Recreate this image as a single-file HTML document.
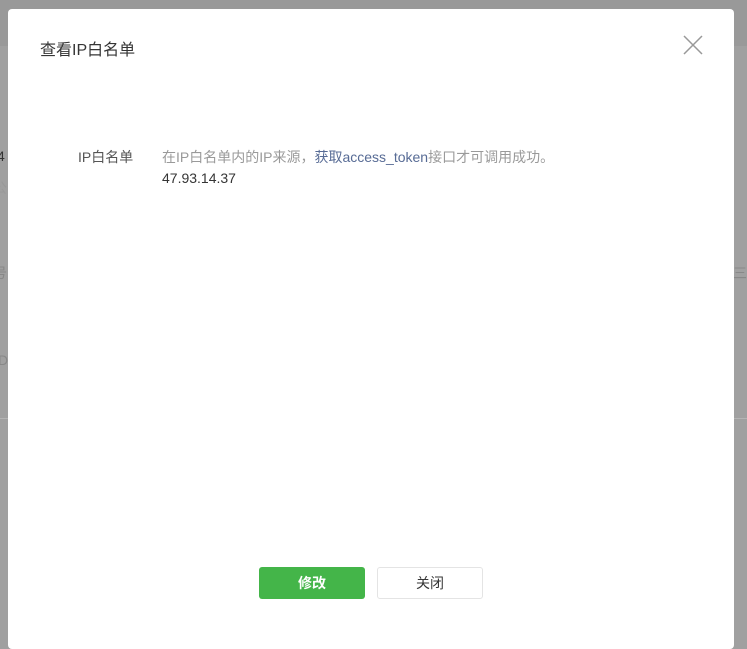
<!DOCTYPE html>
<html><head><meta charset="utf-8"><style>
html,body{margin:0;padding:0}
body{width:747px;height:632px;overflow:hidden;background:#a0a0a0;position:relative;font-family:"Liberation Sans","Noto Sans CJK SC",sans-serif}
.top{position:absolute;left:0;top:0;width:747px;height:46px;background:#999}
.line{position:absolute;left:0;top:418px;width:747px;height:1px;background:#b4b4b4}
.bg{position:absolute;color:#555;font-size:14px}
.modal{position:absolute;left:8px;top:9px;width:726px;height:640px;background:#fff;border-radius:4px}
.title{position:absolute;left:32px;top:27px;font-size:16px;color:#353535}
.close{position:absolute;left:675px;top:26px}
.lbl{position:absolute;left:70px;top:138px;font-size:14px;color:#555}
.desc{position:absolute;left:154px;top:138px;font-size:14px;color:#9a9a9a;white-space:nowrap}
.desc a{color:#576b95;text-decoration:none}
.ip{position:absolute;left:154px;top:161px;font-size:14px;color:#353535}
.btn{position:absolute;top:558px;height:32px;line-height:32px;text-align:center;font-size:14px;border-radius:3px;box-sizing:border-box}
.b1{left:251px;width:106px;background:#44b549;color:#fff;font-weight:bold}
.b2{left:369px;width:106px;border:1px solid #e4e4e4;line-height:30px;color:#353535;background:#fff}
</style></head><body>
<div class="top"></div>
<div class="line"></div>
<div class="bg" style="left:-3px;top:148px;color:#333">4</div>
<div class="bg" style="left:-7px;top:178px;color:#999">公</div>
<div class="bg" style="left:-7px;top:263px;color:#888">号</div>
<div class="bg" style="left:-2px;top:352px;color:#888">D</div>
<div class="bg" style="left:733px;top:263px;color:#888">三</div>
<div class="modal">
<div class="title">查看IP白名单</div>
<svg class="close" width="20" height="20" viewBox="0 0 20 20"><path d="M1 1L19 19M19 1L1 19" stroke="#999" stroke-width="1.5" fill="none"/></svg>
<div class="lbl">IP白名单</div>
<div class="desc">在IP白名单内的IP来源，<a>获取access_token</a>接口才可调用成功。</div>
<div class="ip">47.93.14.37</div>
<div class="btn b1">修改</div>
<div class="btn b2">关闭</div>
</div>
</body></html>
